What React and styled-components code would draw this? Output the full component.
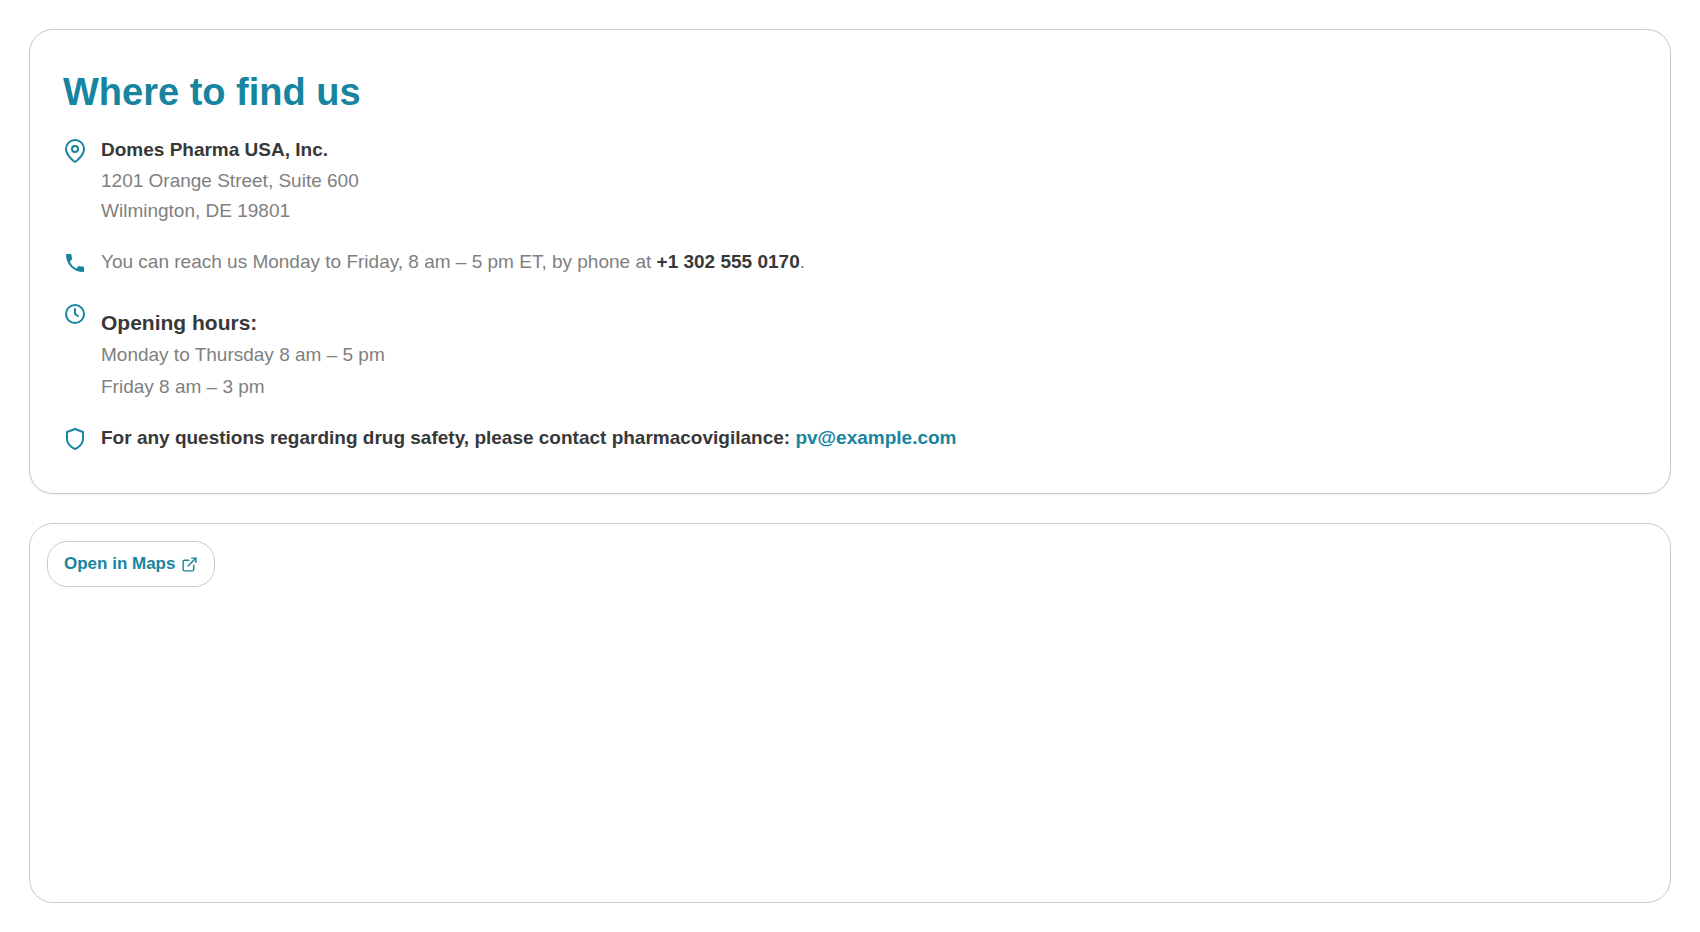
import React from "react";

import styled, { createGlobalStyle, ThemeProvider } from "styled-components";

const theme = {
  accent: "#1784a0",
  text: "#383838",
  muted: "#808080",
  line: "#c9c9c9",
  bg: "#ffffff",
};

const MAPS_URL = "#maps";

export default function App() {
  return (
    <ThemeProvider theme={theme}>
      <GlobalStyle />
      <Page>
        <InfoCard>
          <Title>Where to find us</Title>
          <Rows>
            <Row>
              <PinIcon />
              <Address>
                <Company>Domes Pharma USA, Inc.</Company>
                <Line>1201 Orange Street, Suite 600</Line>
                <Line>Wilmington, DE 19801</Line>
              </Address>
            </Row>
            <Row>
              <PhoneIcon />
              <Text>
                You can reach us Monday to Friday, 8 am – 5 pm ET, by phone at{" "}
                <PhoneLink href="tel:+13025550170">+1 302 555 0170</PhoneLink>.
              </Text>
            </Row>
            <Row>
              <ClockIcon />
              <div>
                <HoursTitle>Opening hours:</HoursTitle>
                <Hours>
                  <li>Monday to Thursday 8 am – 5 pm</li>
                  <li>Friday 8 am – 3 pm</li>
                </Hours>
              </div>
            </Row>
            <Row>
              <ShieldIcon />
              <Strong>
                For any questions regarding drug safety, please contact
                pharmacovigilance:{" "}
                <MailLink href="mailto:pv@example.com">pv@example.com</MailLink>
              </Strong>
            </Row>
          </Rows>
        </InfoCard>
        <MapCard>
          <MapsLink href={MAPS_URL}>
            Open in Maps
            <ExternalIcon />
          </MapsLink>
        </MapCard>
      </Page>
    </ThemeProvider>
  );
}

function PinIcon() {
  return (
    <Icon viewBox="0 0 24 24" aria-hidden="true">
      <path d="M12 22.700C11.300 22.700 3 16.400 3 10a9 9 0 0 1 18 0c0 6.400-8.300 12.700-9 12.700z" />
      <circle cx="12" cy="10" r="3" />
    </Icon>
  );
}

function PhoneIcon() {
  return (
    <SolidIcon viewBox="0 0 24 24" aria-hidden="true">
      <path d="M6.62 10.79a15.05 15.05 0 0 0 6.59 6.59l2.2-2.2a1 1 0 0 1 1.02-.24 11.36 11.36 0 0 0 3.57.57 1 1 0 0 1 1 1V20a1 1 0 0 1-1 1A17 17 0 0 1 3 4a1 1 0 0 1 1-1h3.5a1 1 0 0 1 1 1c0 1.25.2 2.45.57 3.57a1 1 0 0 1-.25 1.02z" />
    </SolidIcon>
  );
}

function ClockIcon() {
  return (
    <Icon viewBox="0 0 24 24" aria-hidden="true">
      <circle cx="12" cy="12" r="9" />
      <path d="M12 7v5l3 2" />
    </Icon>
  );
}

function ShieldIcon() {
  return (
    <Icon viewBox="0 0 24 24" aria-hidden="true">
      <path d="M12 22s8-3.400 8-10V5l-8-3-8 3v7c0 6.600 8 10 8 10z" />
    </Icon>
  );
}

function ExternalIcon() {
  return (
    <SmallIcon viewBox="0 0 24 24" aria-hidden="true">
      <path d="M18 13v6a2 2 0 0 1-2 2H5a2 2 0 0 1-2-2V8a2 2 0 0 1 2-2h6" />
      <path d="M15 3h6v6" />
      <path d="M10 14L21 3" />
    </SmallIcon>
  );
}

const GlobalStyle = createGlobalStyle`
  body {
    margin: 0;
    background-color: ${theme.bg};
    color: ${theme.muted};
    font-family: "Liberation Sans", Arial, sans-serif;
    font-size: 19px;
    line-height: 30px;
  }
`;

const Page = styled.main`
  display: grid;
  gap: 29px;
  padding: 29px;
`;

const Card = styled.section`
  box-sizing: border-box;
  border: 1px solid ${({ theme }) => theme.line};
  border-radius: 24px;
  background-color: ${({ theme }) => theme.bg};
`;

const InfoCard = styled(Card)`
  padding: 41px 33px 40px;
  box-shadow: 0 1px 2px rgba(0, 0, 0, 0.05);
`;

const MapCard = styled(Card)`
  min-height: 380px;
  padding: 17px;
`;

const Title = styled.h1`
  margin: 0 0 22px;
  color: ${({ theme }) => theme.accent};
  font-size: 38px;
  line-height: 42px;
`;

const Rows = styled.div`
  display: grid;
  gap: 21px;
`;

const Row = styled.div`
  display: flex;
  align-items: flex-start;
  gap: 14px;
`;

const Icon = styled.svg`
  flex: none;
  width: 24px;
  height: 24px;
  margin-top: 4px;
  fill: none;
  stroke: ${({ theme }) => theme.accent};
  stroke-width: 2;
  stroke-linecap: round;
  stroke-linejoin: round;
`;

const SolidIcon = styled(Icon)`
  fill: ${({ theme }) => theme.accent};
  stroke: none;
`;

const SmallIcon = styled(Icon)`
  width: 17px;
  height: 17px;
  margin-top: 0;
`;

const Address = styled.address`
  font-style: normal;
`;

const Company = styled.strong`
  display: block;
  margin-bottom: 1px;
  color: ${({ theme }) => theme.text};
`;

const Line = styled.span`
  display: block;
`;

const Text = styled.p`
  margin: 0;
`;

const Strong = styled(Text)`
  color: ${({ theme }) => theme.text};
  font-weight: bold;
`;

const HoursTitle = styled.h2`
  margin: 10px 0 2px;
  color: ${({ theme }) => theme.text};
  font-size: 21px;
  line-height: 30px;
`;

const Hours = styled.ul`
  display: grid;
  gap: 2px;
  margin: 0;
  padding: 0;
  list-style: none;
`;

const PhoneLink = styled.a`
  color: ${({ theme }) => theme.text};
  font-weight: bold;
  text-decoration: none;
`;

const MailLink = styled.a`
  color: ${({ theme }) => theme.accent};
  text-decoration: none;
  &:hover {
    text-decoration: underline;
  }
`;

const MapsLink = styled.a`
  display: inline-flex;
  align-items: center;
  gap: 6px;
  padding: 9px 16px;
  border: 1px solid ${({ theme }) => theme.line};
  border-radius: 20px;
  background-color: ${({ theme }) => theme.bg};
  color: ${({ theme }) => theme.accent};
  font-size: 17px;
  font-weight: bold;
  line-height: 26px;
  text-decoration: none;
`;
